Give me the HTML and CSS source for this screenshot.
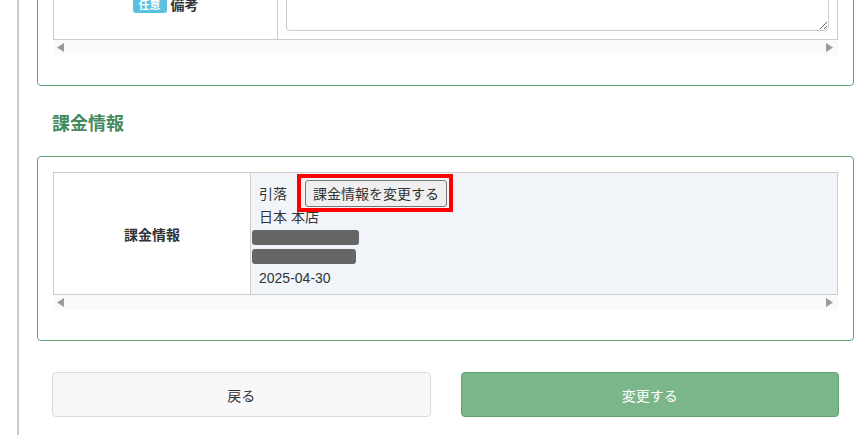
FILE: index.html
```html
<!DOCTYPE html>
<html lang="ja">
<head>
    <meta charset="UTF-8">
    <title>課金情報</title>
    <link rel="stylesheet" href="styles.css">
</head>
<body>
    <div class="main">
        <!-- 備考 -->
        <div class="panel panel-top">
            <table class="form-table">
                <tr>
                    <th class="label-cell wide">
                        <span class="badge">任意</span>備考
                    </th>
                    <td class="value-cell">
                        <textarea class="note"></textarea>
                    </td>
                </tr>
            </table>
            <div class="scroll-strip">
                <svg width="7" height="9" viewBox="0 0 7 9"><polygon points="7,0 7,9 0,4.5" fill="#999"/></svg>
                <svg width="7" height="9" viewBox="0 0 7 9"><polygon points="0,0 0,9 7,4.5" fill="#999"/></svg>
            </div>
        </div>

        <h2 class="section-title">課金情報</h2>

        <div class="panel">
            <table class="form-table">
                <tr>
                    <th class="label-cell">課金情報</th>
                    <td class="value-cell billing">
                        <div class="pay-line">
                            <span>引落</span>
                            <span class="highlight">
                                <button class="change-button">課金情報を変更する</button>
                            </span>
                        </div>
                        <div class="line">日本 本店</div>
                        <div class="masked m1"></div>
                        <div class="masked m2"></div>
                        <div class="line">2025-04-30</div>
                    </td>
                </tr>
            </table>
            <div class="scroll-strip">
                <svg width="7" height="9" viewBox="0 0 7 9"><polygon points="7,0 7,9 0,4.5" fill="#999"/></svg>
                <svg width="7" height="9" viewBox="0 0 7 9"><polygon points="0,0 0,9 7,4.5" fill="#999"/></svg>
            </div>
        </div>

        <div class="actions">
            <button class="button back-button">戻る</button>
            <button class="button submit-button">変更する</button>
        </div>
    </div>
</body>
</html>
```

FILE: styles.css
```css
* {
    margin: 0;
    padding: 0;
    box-sizing: border-box;
}

body {
    font-family: "Liberation Sans", "Noto Sans CJK JP", sans-serif;
    font-size: 14px;
    color: #333;
    background-color: #fff;
    overflow: hidden;
}

.main {
    margin-left: 17px;
    border-left: 2px solid #c8c8ce;
    padding: 0 12px 18px 18px;
    min-height: 100vh;
}

/* Panels */
.panel {
    border: 1px solid #62a676;
    border-radius: 4px;
    padding: 15px 15px 30px;
}

.panel-top {
    margin-top: -49px;
}

.form-table {
    width: 100%;
    border-collapse: collapse;
}

.form-table th,
.form-table td {
    border: 1px solid #ccc;
}

.label-cell {
    width: 197px;
    font-weight: bold;
    text-align: center;
    vertical-align: middle;
    background-color: #fff;
}

.label-cell.wide {
    width: 224px;
}

.badge {
    display: inline-block;
    background-color: #5bc0de;
    color: #fff;
    font-size: 11px;
    line-height: 16px;
    padding: 0 6px;
    border-radius: 3px;
    margin-right: 4px;
    vertical-align: 1px;
}

.value-cell {
    padding: 8px;
    vertical-align: top;
}

.note {
    display: block;
    width: 100%;
    height: 55px;
    border: 1px solid #ccc;
    border-radius: 4px;
    resize: vertical;
}

.scroll-strip {
    display: flex;
    justify-content: space-between;
    align-items: center;
    height: 15px;
    padding: 0 5px 0 4px;
    background-color: #fafafa;
}

/* Section title */
.section-title {
    font-size: 18px;
    line-height: 26px;
    color: #468a5e;
    margin: 25px 0 19px 15px;
}

/* Billing cell */
.billing {
    background-color: #f1f4f9;
    padding: 6px 8px 6px;
}

.pay-line {
    display: flex;
    align-items: center;
    gap: 18px;
    height: 28px;
}

.highlight {
    position: relative;
    display: inline-flex;
}

/* red annotation frame over the button */
.highlight::after {
    content: "";
    position: absolute;
    top: -6px;
    left: -8px;
    right: -6px;
    bottom: -5px;
    border: 4px solid #f00;
}

.change-button {
    font-family: inherit;
    font-size: 14px;
    color: #333;
    height: 27px;
    padding: 0 7px;
    background-color: #efefef;
    border: 1px solid #767676;
    border-radius: 3px;
}

.line {
    line-height: 20px;
}

.masked {
    height: 15px;
    margin: 3px 0 4px -7px;
    background-color: #666;
    border-radius: 3px;
}

.m1 {
    width: 107px;
}

.m2 {
    width: 104px;
}

/* Bottom buttons */
.actions {
    display: flex;
    gap: 30px;
    padding: 0 15px;
    margin-top: 31px;
}

.button {
    flex: 1;
    height: 45px;
    font-family: inherit;
    font-size: 14px;
    border-radius: 4px;
    cursor: pointer;
}

.back-button {
    background-color: #f8f8f8;
    border: 1px solid #ddd;
    color: #333;
}

.submit-button {
    background-color: #7ab68a;
    border: 1px solid #62a06f;
    color: #fff;
}
```
